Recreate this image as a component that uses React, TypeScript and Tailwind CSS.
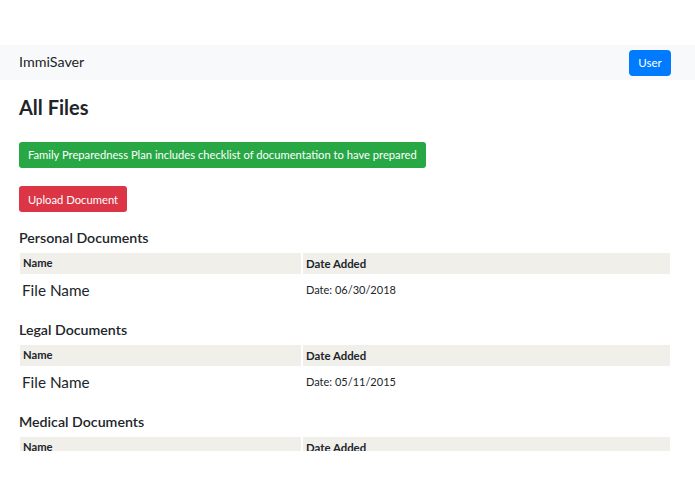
import React from "react";

const sections = [
  { title: "Personal Documents", date: "Date: 06/30/2018" },
  { title: "Legal Documents", date: "Date: 05/11/2015" },
  { title: "Medical Documents", date: "" },
];

export default function App() {
  return (
    <div
      className="w-[695px] h-[494px] bg-white text-[#212529] overflow-hidden"
      style={{ fontFamily: "Lato, 'Open Sans', sans-serif" }}
    >
      <div className="h-[451px] overflow-hidden">
        <div className="h-[45px]" />
        <nav className="h-[35px] bg-[#f8f9fa] flex items-center justify-between pl-[19px] pr-[24px]">
          <span className="text-[14.3px] leading-none">ImmiSaver</span>
          <button className="h-[26px] w-[42px] rounded-[4px] bg-[#007bff] text-white text-[11.5px] leading-none">
            User
          </button>
        </nav>
        <main className="pl-[19px] pr-[25px]">
          <h1 className="mt-[15px] text-[20px] font-bold leading-[24px]">All Files</h1>
          <div className="mt-[22px]">
            <button className="h-[26px] px-[9px] rounded-[3px] bg-[#28a745] text-white text-[11.2px] leading-none">
              Family Preparedness Plan includes checklist of documentation to have prepared
            </button>
          </div>
          <div className="mt-[18px]">
            <button className="h-[26px] px-[9px] rounded-[3px] bg-[#dc3545] text-white text-[11.25px] leading-none">
              Upload Document
            </button>
          </div>
          <div className="mt-[16px]">
            {sections.map((s) => (
              <section key={s.title} className="mb-[14px]">
                <h2 className="text-[14.2px] font-semibold leading-[20px]">{s.title}</h2>
                <div className="mt-[5px] ml-[1px] grid grid-cols-[281px_1fr] gap-x-[2px]">
                  <div className="h-[21px] bg-[#f0efea] flex items-center pl-[3px] text-[11.2px] font-bold">
                    Name
                  </div>
                  <div className="h-[21px] bg-[#f0efea] flex items-center pl-[3px] text-[11.4px] font-bold">
                    Date Added
                  </div>
                  <div className="h-[32px] flex items-center pl-[2px] text-[15.3px]">File Name</div>
                  <div className="h-[32px] flex items-center pl-[3px] text-[11px]">{s.date}</div>
                </div>
              </section>
            ))}
          </div>
        </main>
      </div>
    </div>
  );
}
